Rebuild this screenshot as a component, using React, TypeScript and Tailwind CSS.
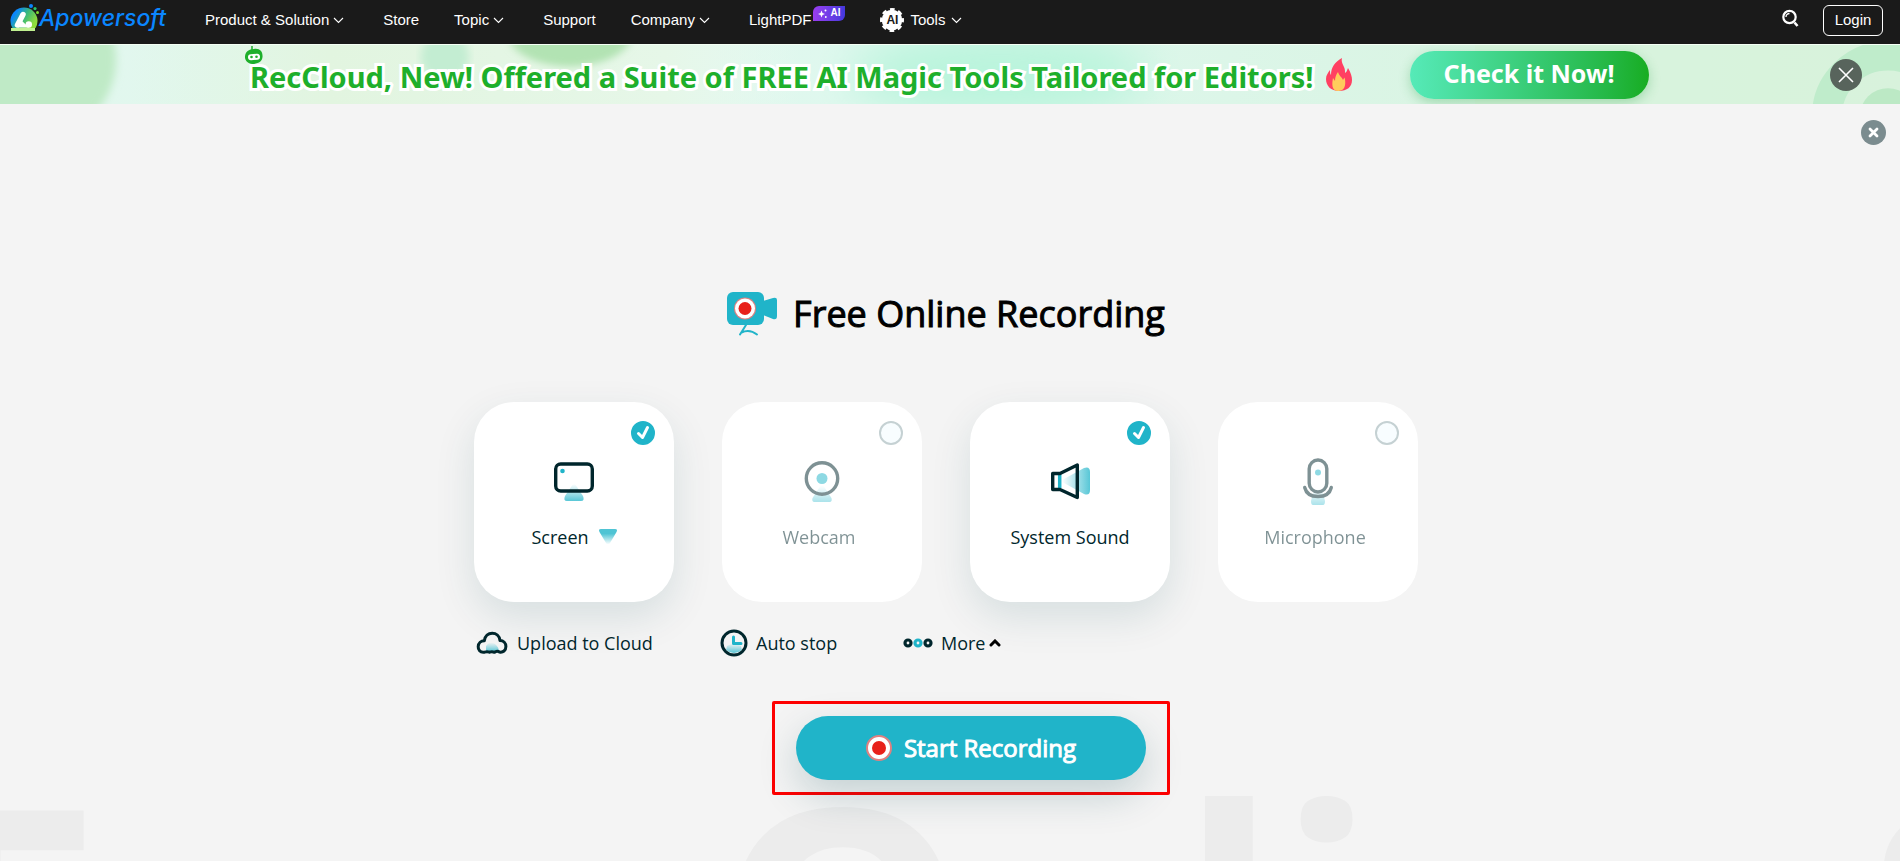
import { useState } from "react";
import type { ReactNode } from "react";

type SourceId = "screen" | "webcam" | "sound" | "mic";

const Chevron = () => (
  <svg width="11" height="7" viewBox="0 0 11 7" fill="none" stroke="#fff" strokeWidth="1.1" className="mr-1">
    <path d="M1 1l4.5 4.5L10 1" />
  </svg>
);

const Logo = () => (
  <svg width="30" height="28" viewBox="0 0 30 28">
    <defs>
      <linearGradient id="logoBg" x1="0" y1="0" x2="1" y2="0.5">
        <stop offset="0.25" stopColor="#0a86ff" />
        <stop offset="0.6" stopColor="#38b87c" />
        <stop offset="1" stopColor="#8edb3c" />
      </linearGradient>
    </defs>
    <path d="M2.500 24A13.500 13.500 0 1 1 25.500 24z" fill="url(#logoBg)" />
    <path d="M1 25.500h24" stroke="#c0f090" strokeWidth="3" />
    <path d="M7.500 21L13 10.500" stroke="#fff" strokeWidth="5.500" strokeLinecap="round" />
    <path d="M11 16l8 7.500H8" fill="#fff" />
    <circle cx="18.800" cy="20.500" r="3.200" fill="#fff" />
    <circle cx="21" cy="2" r="2" fill="#0a86ff" />
    <circle cx="25" cy="4.600" r="1.600" fill="#25c46e" />
    <circle cx="27.500" cy="8.500" r="1.500" fill="#7bdc2e" />
  </svg>
);

const RecordDot = () => (
  <span className="flex size-[26px] items-center justify-center rounded-full border-2 border-[#e08080] bg-white">
    <span className="size-[14px] rounded-full bg-[#e8201a]" />
  </span>
);

const CameraIcon = () => (
  <svg width="50" height="45" viewBox="0 0 50 45">
    <rect width="37" height="33" rx="6" fill="#20b4c9" />
    <path d="M36 9l10-3q4-1 4 2v16q0 4-4 3l-10-4z" fill="#20b4c9" />
    <circle cx="18" cy="16.500" r="11" fill="#e08080" />
    <circle cx="18" cy="16.500" r="10" fill="#fff" />
    <circle cx="18" cy="16.500" r="6.500" fill="#e8201a" />
    <path d="M19 33l-6 9.500M14.500 40.500q8-4 15.500 2" fill="none" stroke="#20b4c9" strokeWidth="2" strokeLinecap="round" />
  </svg>
);

const TealFade = ({ id, horizontal }: { id: string; horizontal?: boolean }) => (
  <defs>
    <linearGradient id={id} x1="0" y1="0" x2={horizontal ? "1" : "0"} y2={horizontal ? "0" : "1"}>
      <stop offset="0" stopColor="#20b4c9" stopOpacity="0" />
      <stop offset="1" stopColor="#20b4c9" stopOpacity="0.75" />
    </linearGradient>
  </defs>
);

const ScreenIcon = () => (
  <svg width="44" height="46" viewBox="0 0 44 46" fill="none">
    <TealFade id="screenFade" />
    <path d="M19 28q3-6 6 0l6 9q2 5-2 5H15q-4 0-2-5z" fill="url(#screenFade)" />
    <rect x="3.700" y="5" width="36.600" height="27" rx="5" stroke="#00262c" strokeWidth="3.400" />
    <circle cx="10.500" cy="12" r="2.300" fill="#20b4c9" />
  </svg>
);

const WebcamIcon = () => (
  <svg width="44" height="46" viewBox="0 0 44 46" fill="none">
    <TealFade id="camFade" />
    <path d="M19 29q3-5 6 0l6.500 10q1 4-2 4h-15q-3 0-2-4z" fill="url(#camFade)" />
    <circle cx="22" cy="19.500" r="15.700" stroke="#00262c" strokeWidth="3.400" />
    <circle cx="22" cy="19.500" r="5.500" fill="#20b4c9" />
  </svg>
);

const SoundIcon = () => (
  <svg width="44" height="46" viewBox="0 0 44 46" fill="none">
    <TealFade id="soundFade" horizontal />
    <path d="M16 24q-4-2 0-4l20-11q6-2 6 4v18q0 6-6 4z" fill="url(#soundFade)" />
    <path d="M11.700 15v14" stroke="#20b4c9" strokeWidth="3.500" />
    <path d="M4.700 14.500H12L29.300 6v32.500L12 30.500H4.700z" stroke="#00262c" strokeWidth="3.400" strokeLinejoin="round" />
  </svg>
);

const MicIcon = () => (
  <svg width="44" height="46" viewBox="0 0 44 46" fill="none" className="overflow-visible">
    <TealFade id="micFade" />
    <path d="M18 30h8l3 12q0 4-2 4H17q-2 0-2-4z" fill="url(#micFade)" />
    <rect x="13.200" y="1" width="17.600" height="32" rx="8.800" stroke="#00262c" strokeWidth="3.400" />
    <path d="M8.700 28.500c1.300 5.500 6 9 13.300 9s12-3.500 13.300-9" stroke="#00262c" strokeWidth="3.400" strokeLinecap="round" />
    <circle cx="22" cy="13.500" r="3" fill="#20b4c9" />
  </svg>
);

const Triangle = () => (
  <svg width="18" height="16" viewBox="0 0 18 16">
    <defs>
      <linearGradient id="triFade" x1="0" y1="0" x2="0" y2="1">
        <stop offset="0.3" stopColor="#4fc4d4" />
        <stop offset="1" stopColor="#4fc4d4" stopOpacity="0" />
      </linearGradient>
    </defs>
    <path d="M2 0h14q3 0 1.500 3L11 14q-2 3-4 0L0.500 3Q-1 0 2 0z" fill="url(#triFade)" />
  </svg>
);

const CloudIcon = () => (
  <svg width="32" height="24" viewBox="0 0 32 24" fill="none">
    <TealFade id="cloudFade" />
    <path d="M10 21V15q4-6 9-2 4 3 4 8z" fill="url(#cloudFade)" />
    <path
      d="M8.500 21.200C4 22 2 18.500 2.200 15.500 2.400 12 5 9.700 8.300 9.700 9 5 12.300 2.200 16.200 2.200S23.500 5 24 9.500c3.500 0 5.900 2.700 5.900 6 0 4-2.900 6.200-6.400 5.500-1.500-1-3.500-1-5 .3-1.800-.8-3.500-.8-5 0-1.500-.8-3.200-.8-5-.1z"
      stroke="#00262c"
      strokeWidth="3"
      strokeLinejoin="round"
    />
  </svg>
);

const ClockIcon = () => (
  <svg width="28" height="28" viewBox="0 0 28 28" fill="none">
    <TealFade id="clockFade" />
    <path d="M7 17q7-5 14 0l1 4q-8 6-16 0z" fill="url(#clockFade)" />
    <circle cx="14" cy="14" r="12" stroke="#00262c" strokeWidth="3" />
    <path d="M13.500 8v6.500H21" stroke="#20b4c9" strokeWidth="3" strokeLinecap="round" strokeLinejoin="round" />
  </svg>
);

const DotsIcon = () => (
  <svg width="30" height="10" viewBox="0 0 30 10" fill="none" strokeWidth="3.200">
    <circle cx="5" cy="5" r="3" stroke="#00262c" />
    <circle cx="15" cy="5" r="3" stroke="#20b4c9" />
    <circle cx="25" cy="5" r="3" stroke="#00262c" />
  </svg>
);

const Flame = () => (
  <svg width="26" height="33" viewBox="0 0 26 33">
    <path d="M16 0c-1 4 1 6 2 9 1 2 1 4 1 6 2-1 2-3 3-5 3 5 4 9 4 12 0 7-5 11-13 11S0 28 0 21c0-4 2-6 4-9 0 2 0 4 1 5C5 9 9 4 16 0z" fill="#ff4062" />
    <path d="M12 14c1 4 4 5 5 8l1.500-2.500C20 24 20 33 12.500 33S6 25 7 20l2 3c0-4 1-6 3-9z" fill="#ffcc5c" />
  </svg>
);

const Robot = () => (
  <svg width="18" height="18" viewBox="0 0 18 18">
    <path d="M7 0v4" stroke="#1eaf2b" strokeWidth="1.500" />
    <path d="M9 3c6-1 9 3 8.500 8-.5 4-3 6-8.500 7-5 0-8-2-9-6-.500-5 3-9 9-9z" fill="#1eaf2b" />
    <rect x="3" y="8" width="12" height="6" rx="3" fill="#fff" transform="rotate(-5 9 11)" />
    <circle cx="6.500" cy="11" r="1.300" fill="#1eaf2b" />
    <circle cx="11.500" cy="10.700" r="1.300" fill="#1eaf2b" />
  </svg>
);

const NavLink = ({ label, menu }: { label: string; menu?: boolean }) => (
  <a href="#" className="flex items-center gap-1">
    {label}
    {menu && <Chevron />}
  </a>
);

function Header() {
  return (
    <header className="flex h-11 items-center bg-[#1a1a1a] pl-[10px] pr-[17px] text-white">
      <a href="#" className="mb-2 flex w-[195px] items-center">
        <Logo />
        <span className="-ml-px font-['Inter',sans-serif] text-[23px] leading-7 font-medium text-[#0a86ff] italic">Apowersoft</span>
      </a>
      <nav className="mb-1 flex flex-1 items-center gap-[35px] text-[15px]">
        <NavLink label="Product & Solution" menu />
        <NavLink label="Store" />
        <NavLink label="Topic" menu />
        <NavLink label="Support" />
        <NavLink label="Company" menu />
        <a href="#" className="flex items-center gap-[2px]">
          LightPDF
          <span className="mb-[14px] flex h-[15px] w-8 items-center justify-center gap-[3px] rounded-tl-md rounded-br-md bg-linear-to-r from-[#9a3df0] to-[#4338dd] text-[10px] leading-3 font-bold">
            <svg width="9" height="9" viewBox="0 0 9 9" fill="#fff">
              <path d="M3.500 1.500l1 2.500 2.500 1-2.500 1-1 2.500-1-2.500L0 5l2.500-1z" />
              <circle cx="7.500" cy="1.500" r="1" />
              <circle cx="7.800" cy="8" r="0.900" />
            </svg>
            AI
          </span>
        </a>
        <a href="#" className="flex items-center gap-[6px]">
          <span className="relative flex size-6 items-center justify-center">
            <svg width="24" height="24" viewBox="0 0 24 24" className="absolute inset-0">
              <circle cx="12" cy="12" r="10.300" fill="#fff" />
              <circle cx="12" cy="12" r="10.800" fill="none" stroke="#fff" strokeWidth="2.400" strokeDasharray="4.700 3.780" strokeDashoffset="2.350" />
            </svg>
            <span className="relative text-[12px] leading-none font-bold text-[#1a1a1a]">AI</span>
          </span>
          Tools
          <Chevron />
        </a>
      </nav>
      <div className="mb-1 flex items-center gap-6 text-[15px]">
        <button aria-label="Search" className="mb-1">
          <svg width="17" height="18" viewBox="0 0 17 18" fill="none" stroke="#fff">
            <circle cx="7.500" cy="8" r="6.200" strokeWidth="2.200" />
            <path d="M4 8a3.500 3.500 0 0 1 3.500-3.500" strokeWidth="1.300" />
            <path d="M12.500 13.500l3 3.500" strokeWidth="2.600" />
          </svg>
        </button>
        <button className="h-[31px] w-[60px] rounded-md border border-white">Login</button>
      </div>
    </header>
  );
}

function PromoBanner() {
  return (
    <section className="relative flex h-15 items-center overflow-hidden border-t border-[#f4fff4] bg-linear-to-r from-[#e2f7ee] via-[#dff8ee] to-[#d5f1da] pr-[38px] pl-[245px] font-['Noto_Sans',sans-serif]">
      <svg className="absolute inset-0 size-full" viewBox="0 0 1900 60" preserveAspectRatio="none">
        <defs>
          <filter id="soft"><feGaussianBlur stdDeviation="4" /></filter>
          <filter id="haze"><feGaussianBlur stdDeviation="24" /></filter>
          <linearGradient id="greenWash">
            <stop offset="0" stopColor="#e2f5e0" stopOpacity="0" />
            <stop offset="0.3" stopColor="#e2f5e0" />
            <stop offset="0.8" stopColor="#e6f7e8" />
            <stop offset="1" stopColor="#edfaf2" stopOpacity="0" />
          </linearGradient>
        </defs>
        <rect x="130" width="670" height="60" fill="url(#greenWash)" />
        <circle cx="36" cy="15" r="80" fill="#bfeac6" filter="url(#soft)" />
        <rect width="60" height="60" fill="#bfeac6" />
        <circle cx="445" cy="12" r="24" fill="#c3edd2" filter="url(#soft)" />
        <ellipse cx="570" cy="-12" rx="62" ry="34" fill="#b2e3b3" filter="url(#soft)" />
        <ellipse cx="1000" cy="30" rx="150" ry="45" fill="#b9f4dc" filter="url(#haze)" />
        <path d="M1475 0h425v60H1475z" fill="#d8f2dc" opacity="0.8" />
        <circle cx="1888" cy="72" r="61" fill="none" stroke="#bfeccb" strokeWidth="30" />
        <circle cx="1888" cy="72" r="28" fill="#bce9c5" />
      </svg>
      <div className="relative flex flex-1 items-center">
        <div className="absolute top-[-5px] left-0"><Robot /></div>
        <p className="pt-1 pl-[5px] text-[29px] leading-10 font-bold whitespace-nowrap text-[#1eaf2b] [-webkit-text-stroke:6px_white] [paint-order:stroke_fill]">
          RecCloud, New! Offered a Suite of FREE AI Magic Tools Tailored for Editors!
        </p>
        <span className="ml-3"><Flame /></span>
        <button className="ml-[58px] h-12 w-[239px] rounded-full bg-linear-to-r from-[#56eab8] to-[#18ad20] pb-1 text-[25px] leading-8 font-bold whitespace-nowrap text-white shadow-[0_4px_12px_rgba(30,160,60,0.3)]">
          Check it Now!
        </button>
      </div>
      <button aria-label="Close banner" className="relative flex size-8 items-center justify-center rounded-full bg-[#58645c]">
        <svg width="16" height="16" viewBox="0 0 16 16" stroke="#fff" strokeWidth="1.600"><path d="M1 1l14 14M15 1L1 15" /></svg>
      </button>
    </section>
  );
}

interface CardProps {
  label: string;
  icon: ReactNode;
  checked: boolean;
  onChange: () => void;
  arrow?: boolean;
}

function SourceCard({ label, icon, checked, onChange, arrow }: CardProps) {
  return (
    <label
      className={`relative flex h-[200px] flex-col items-center rounded-[40px] bg-white pt-[57px] text-[18px] leading-6 text-[#00262c] ${
        checked ? "shadow-[0_15px_40px_rgba(0,70,80,0.12)]" : ""
      }`}
    >
      <input
        type="checkbox"
        checked={checked}
        onChange={onChange}
        className="absolute top-[19px] right-[19px] size-6 appearance-none rounded-full border-2 border-[#c5d1d3] bg-[#f8fdff] checked:border-[#20b4c9] checked:bg-[#20b4c9]"
      />
      {checked && (
        <svg width="24" height="24" viewBox="0 0 24 24" fill="none" className="pointer-events-none absolute top-[19px] right-[19px]">
          <path d="M7.500 12.500l4 4 5-10" stroke="#fff" strokeWidth="3" strokeLinecap="round" strokeLinejoin="round" />
        </svg>
      )}
      <span className={checked ? "" : "opacity-50"}>{icon}</span>
      <span className={`mt-5 flex items-center gap-[10px] ${checked ? "" : "pr-[6px] opacity-50"}`}>
        {label}
        {arrow && <Triangle />}
      </span>
    </label>
  );
}

const SOURCES: { id: SourceId; label: string; icon: ReactNode; arrow?: boolean }[] = [
  { id: "screen", label: "Screen", icon: <ScreenIcon />, arrow: true },
  { id: "webcam", label: "Webcam", icon: <WebcamIcon /> },
  { id: "sound", label: "System Sound", icon: <SoundIcon /> },
  { id: "mic", label: "Microphone", icon: <MicIcon /> },
];

export default function App() {
  const [active, setActive] = useState<SourceId[]>(["screen", "sound"]);

  const toggle = (id: SourceId) =>
    setActive((prev) => (prev.includes(id) ? prev.filter((s) => s !== id) : [...prev, id]));

  return (
    <div className="flex h-screen flex-col overflow-hidden bg-[#f4f4f4] font-['Liberation_Sans',sans-serif]">
      <Header />
      <PromoBanner />
      <main className="relative flex flex-1 flex-col font-['Open_Sans',sans-serif]">
        {/* oversized title running off the bottom edge */}
        <div aria-hidden="true" className="pointer-events-none absolute inset-x-0 top-[600px] h-[157px] overflow-hidden text-[320px] leading-[422px] font-bold whitespace-nowrap text-[#ececec]">
          <span className="absolute top-0 left-[-76px]">Free</span>
          <span className="absolute top-0 left-[715px]">Online</span>
          <span className="absolute top-0 left-[1866px]">S</span>
        </div>

        <button aria-label="Close recorder" className="mt-4 mr-[14px] flex size-[25px] items-center justify-center self-end rounded-full bg-[#7b8c8f]">
          <svg width="11" height="11" viewBox="0 0 11 11" stroke="#fff" strokeWidth="2.800" strokeLinecap="round"><path d="M2 2l7 7M9 2L2 9" /></svg>
        </button>

        <div className="relative mx-auto w-full max-w-[952px] pt-[142px] pr-2">
          <h1 className="flex items-center justify-center gap-4 text-[36px] leading-[54px] text-black [-webkit-text-stroke:1px_black]">
            <CameraIcon />
            Free Online Recording
          </h1>

          <div className="mt-[61px] grid grid-cols-4 gap-12">
            {SOURCES.map((s) => (
              <SourceCard key={s.id} label={s.label} icon={s.icon} arrow={s.arrow} checked={active.includes(s.id)} onChange={() => toggle(s.id)} />
            ))}
          </div>

          <div className="relative mt-[25px] flex h-8 items-center text-[18px] leading-6 text-[#00262c]">
            <button className="flex w-[244px] items-center gap-[9px] pl-[2px]">
              <CloudIcon />
              Upload to Cloud
            </button>
            <button className="flex w-[185px] items-center gap-2 pl-[2px]">
              <ClockIcon />
              Auto stop
            </button>
            <button className="flex items-center gap-2">
              <DotsIcon />
              <span className="flex items-center gap-1">
                More
                <svg width="12" height="8" viewBox="0 0 12 8" fill="none" stroke="#000" strokeWidth="3" strokeLinecap="round"><path d="M2 6l4-4 4 4" /></svg>
              </span>
            </button>
          </div>

          <div className="mt-[42px] flex justify-center pl-[50px]">
            <div className="rounded-xs border-3 border-[#fe0000] px-[21px] py-3">
              <button className="flex h-16 w-[350px] items-center justify-center gap-3 rounded-full bg-[#20b4c9] text-[24px] leading-8 text-white shadow-[0_15px_40px_rgba(0,70,80,0.2)] [-webkit-text-stroke:1px_white]">
                <RecordDot />
                Start Recording
              </button>
            </div>
          </div>
        </div>
      </main>
    </div>
  );
}
